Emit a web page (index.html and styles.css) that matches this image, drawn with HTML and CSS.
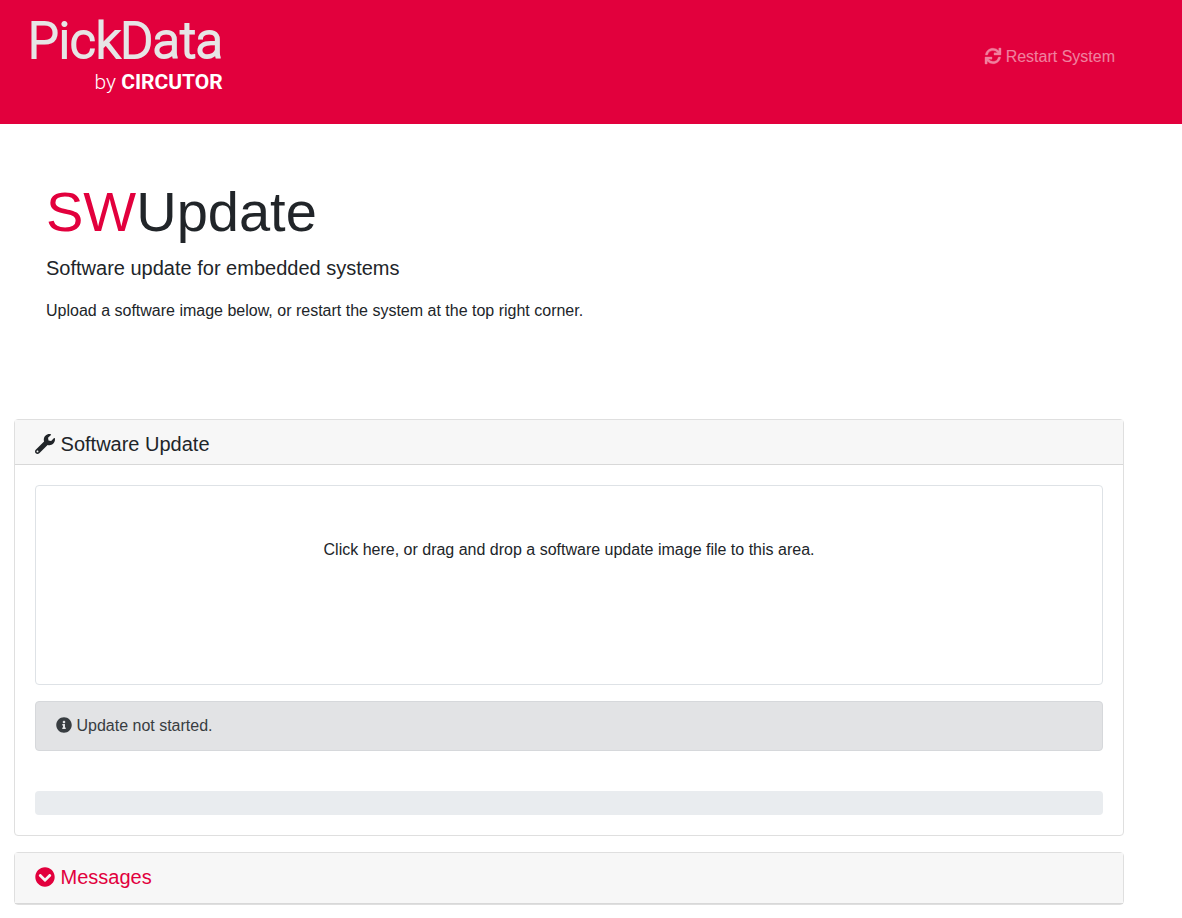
FILE: index.html
```
<!DOCTYPE html>
<html lang="en">
<head>
    <meta charset="utf-8">
    <meta name="viewport" content="width=device-width, initial-scale=1">
    <title>SWUpdate</title>
    <link rel="stylesheet" href="styles.css">
</head>
<body>
    <header class="navbar">
        <a href="#" class="brand">
            <span class="brand-name">PickData</span>
            <span class="brand-by">by <b>CIRCUTOR</b></span>
        </a>
        <a href="#" class="nav-link">
            <svg class="icon" viewBox="0 0 512 512"><path d="M440.65 12.57l4 82.77A247.16 247.16 0 0 0 255.83 8C134.73 8 33.91 94.92 12.29 209.82A12 12 0 0 0 24.09 224h49.05a12 12 0 0 0 11.67-9.26 175.91 175.91 0 0 1 317-56.94l-101.46-4.86a12 12 0 0 0-12.57 12v47.41a12 12 0 0 0 12 12H500a12 12 0 0 0 12-12V12a12 12 0 0 0-12-12h-47.37a12 12 0 0 0-11.98 12.57zM255.83 432a175.61 175.61 0 0 1-146-77.8l101.8 4.87a12 12 0 0 0 12.57-12v-47.4a12 12 0 0 0-12-12H12a12 12 0 0 0-12 12V500a12 12 0 0 0 12 12h47.35a12 12 0 0 0 12-12.6l-4.15-82.57A247.17 247.17 0 0 0 255.83 504c121.11 0 221.93-86.92 243.55-201.82a12 12 0 0 0-11.8-14.18h-49.05a12 12 0 0 0-11.67 9.26A175.86 175.86 0 0 1 255.83 432z"/></svg>
            Restart System
        </a>
    </header>

    <main class="container">
        <section class="intro">
            <h1><span class="accent">SW</span>Update</h1>
            <p class="lead">Software update for embedded systems</p>
            <p>Upload a software image below, or restart the system at the top right corner.</p>
        </section>

        <section class="card">
            <h2 class="card-header">
                <svg class="icon" viewBox="0 0 512 512"><path d="M507.73 109.1c-2.24-9.03-13.54-12.09-20.12-5.51l-74.36 74.36-67.88-11.31-11.31-67.88 74.36-74.36c6.62-6.62 3.43-17.9-5.66-20.16-47.38-11.74-99.55.91-136.58 37.93-39.64 39.64-50.55 97.1-34.05 147.2L18.74 402.76c-24.99 24.99-24.99 65.51 0 90.5 24.99 24.99 65.51 24.99 90.5 0l213.21-213.21c50.12 16.71 107.47 5.68 147.37-34.22 37.07-37.07 49.7-89.32 37.91-136.73zM64 472c-13.25 0-24-10.75-24-24 0-13.26 10.75-24 24-24s24 10.74 24 24c0 13.25-10.75 24-24 24z"/></svg>
                Software Update
            </h2>
            <div class="card-body">
                <button type="button" class="dropzone">Click here, or drag and drop a software update image file to this area.</button>
                <div class="alert" role="alert">
                    <svg class="icon" viewBox="0 0 512 512"><path d="M256 8C119.043 8 8 119.083 8 256c0 136.997 111.043 248 248 248s248-111.003 248-248C504 119.083 392.957 8 256 8zm0 110c23.196 0 42 18.804 42 42s-18.804 42-42 42-42-18.804-42-42 18.804-42 42-42zm56 254c0 6.627-5.373 12-12 12h-88c-6.627 0-12-5.373-12-12v-24c0-6.627 5.373-12 12-12h12v-64h-12c-6.627 0-12-5.373-12-12v-24c0-6.627 5.373-12 12-12h64c6.627 0 12 5.373 12 12v100h12c6.627 0 12 5.373 12 12v24z"/></svg>
                    Update not started.
                </div>
                <div class="progress" role="progressbar" aria-label="Update progress" aria-valuemin="0" aria-valuemax="100" aria-valuenow="0"></div>
            </div>
        </section>

        <section class="card messages">
            <h2 class="card-header">
                <a href="#" class="accent">
                    <svg class="icon" viewBox="0 0 512 512"><path d="M504 256c0 137-111 248-248 248S8 393 8 256 119 8 256 8s248 111 248 248zM273 369.9l135.5-135.5c9.4-9.4 9.4-24.6 0-33.9l-17-17c-9.4-9.4-24.6-9.4-33.9 0L256 285.1 154.4 183.5c-9.4-9.4-24.6-9.4-33.9 0l-17 17c-9.4 9.4-9.4 24.6 0 33.9L239 369.9c9.4 9.4 24.6 9.4 34 0z"/></svg>
                    Messages
                </a>
            </h2>
        </section>
    </main>
</body>
</html>
```

FILE: styles.css
```
* {
    box-sizing: border-box;
}

body {
    margin: 0;
    background-color: #fff;
    color: #212529;
    font-family: "Liberation Sans", Arial, sans-serif;
    font-size: 16px;
    line-height: 24px;
}

a {
    text-decoration: none;
}

.icon {
    width: 1em;
    height: 1em;
    fill: currentColor;
    vertical-align: -0.125em;
}

.accent {
    color: #e2003d;
}

/* top bar */
.navbar {
    display: flex;
    justify-content: space-between;
    align-items: flex-start;
    min-height: 124px;
    padding: 12px 67px 0 28px;
    background-color: #e2003d;
}

.brand {
    display: flex;
    flex-direction: column;
    align-items: flex-end;
    color: #e6e6e6;
    font-family: Roboto, sans-serif;
}

.brand-name {
    font-size: 50px;
    font-weight: 300;
    line-height: 58px;
    -webkit-text-stroke: 2px #e6e6e6;
}

.brand-by {
    font-weight: 300;
    font-size: 21px;
    line-height: 24px;
    color: #fff;
}

.brand-by b {
    font-weight: 700;
}

.nav-link {
    margin-top: 33px;
    color: #fff;
    opacity: 0.5;
}

.nav-link .icon {
    stroke: currentColor;
    stroke-width: 12px;
    overflow: visible;
}

.nav-link:hover {
    opacity: 0.75;
}

.container {
    margin: 0 58px 0 14px;
}

.intro {
    padding: 54px 32px 80px;
}

.intro h1 {
    margin: 0 0 8px;
    font-size: 56px;
    font-weight: 400;
    line-height: 67px;
}

.intro p {
    margin: 0 0 16px;
}

.intro .lead {
    font-size: 20px;
    line-height: 30px;
}

/* cards */
.card {
    margin-bottom: 16px;
    border: 1px solid #dfdfdf;
    border-radius: 4px;
    background-color: #fff;
}

.card-header {
    margin: 0;
    padding: 12px 20px 8px;
    border-bottom: 1px solid rgba(0, 0, 0, 0.125);
    background-color: #f7f7f7;
    font-size: 20px;
    font-weight: 400;
    line-height: 24px;
}

.card-body {
    padding: 20px;
}

.dropzone {
    display: flex;
    justify-content: center;
    align-items: flex-start;
    width: 100%;
    min-height: 200px;
    margin-bottom: 16px;
    padding: 52px 20px;
    border: 1px solid #dee2e6;
    border-radius: 4px;
    background-color: #fff;
    color: inherit;
    font: inherit;
    cursor: pointer;
}

.alert {
    margin-bottom: 40px;
    padding: 12px 20px;
    border: 1px solid #d6d8db;
    border-radius: 4px;
    background-color: #e2e3e5;
    color: #383d41;
}

.progress {
    height: 24px;
    border-radius: 4px;
    background-color: #e9ecef;
}

.messages .card-header {
    padding-bottom: 14px;
}
```
